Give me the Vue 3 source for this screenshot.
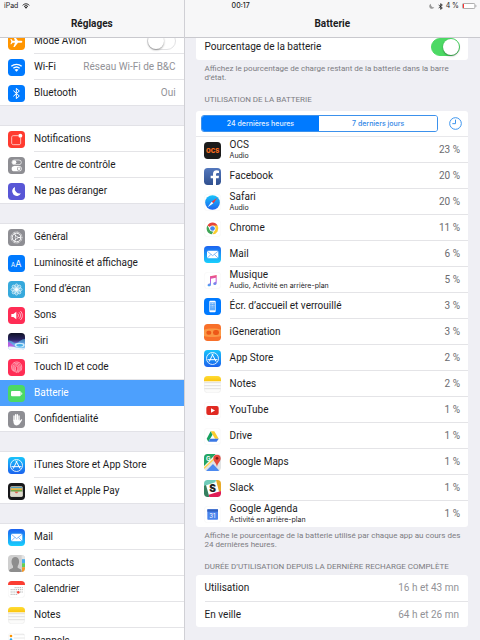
<script setup>
import { h, ref } from 'vue'

const airplane = ref(false)
const showPercent = ref(true)
const period = ref('24h')

// Lettering that sits on top of an icon's artwork, in the icon's 51-unit grid.
const lettering = {
  display: [
    { x: 9, y: 35, size: 18, text: 'A' },
    { x: 22, y: 35, size: 27, text: 'A' }
  ],
  ocs: [{ x: 6, y: 32, size: 18, weight: 900, fill: '#f56a1c', text: 'OCS' }],
  maps: [{ x: 6, y: 20, size: 18, weight: 700, text: 'G' }],
  slack: [{ x: 16, y: 36, size: 30, weight: 900, fill: '#222', text: 'S' }],
  agenda: [{ x: 16, y: 36, size: 18, text: '31' }]
}

const Icon = ({ name }) =>
  h('svg', { viewBox: '0 0 51 51', 'aria-hidden': 'true' }, [
    h('use', { href: `#i-${name}`, width: 51, height: 51 }),
    ...(lettering[name] || []).map((l) =>
      h('text', { x: l.x, y: l.y, 'font-size': l.size, 'font-weight': l.weight || 400, fill: l.fill || '#fff' }, l.text)
    )
  ])
Icon.props = ['name']

const groups = [
  [
    { id: 'airplane', label: 'Mode Avion', toggle: true },
    { id: 'wifi', label: 'Wi-Fi', value: 'Réseau Wi-Fi de B&C' },
    { id: 'bluetooth', label: 'Bluetooth', value: 'Oui' }
  ],
  [
    { id: 'notifications', label: 'Notifications' },
    { id: 'control', label: 'Centre de contrôle' },
    { id: 'dnd', label: 'Ne pas déranger' }
  ],
  [
    { id: 'general', label: 'Général' },
    { id: 'display', label: 'Luminosité et affichage' },
    { id: 'wallpaper', label: 'Fond d’écran' },
    { id: 'sounds', label: 'Sons' },
    { id: 'siri', label: 'Siri' },
    { id: 'touchid', label: 'Touch ID et code' },
    { id: 'battery', label: 'Batterie', active: true },
    { id: 'privacy', label: 'Confidentialité' }
  ],
  [
    { id: 'appstore', label: 'iTunes Store et App Store' },
    { id: 'wallet', label: 'Wallet et Apple Pay' }
  ],
  [
    { id: 'mail', label: 'Mail' },
    { id: 'contacts', label: 'Contacts' },
    { id: 'calendar', label: 'Calendrier' },
    { id: 'notes', label: 'Notes' },
    { id: 'reminders', label: 'Rappels' }
  ]
]

const apps = [
  { id: 'ocs', name: 'OCS', detail: 'Audio', pct: 23 },
  { id: 'facebook', name: 'Facebook', pct: 20 },
  { id: 'safari', name: 'Safari', detail: 'Audio', pct: 20 },
  { id: 'chrome', name: 'Chrome', pct: 11 },
  { id: 'mail', name: 'Mail', pct: 6 },
  { id: 'music', name: 'Musique', detail: 'Audio, Activité en arrière-plan', pct: 5 },
  { id: 'lockscreen', name: 'Écr. d’accueil et verrouillé', pct: 3 },
  { id: 'igen', name: 'iGeneration', pct: 3 },
  { id: 'appstore', name: 'App Store', pct: 2 },
  { id: 'notes', name: 'Notes', pct: 2 },
  { id: 'youtube', name: 'YouTube', pct: 1 },
  { id: 'drive', name: 'Drive', pct: 1 },
  { id: 'maps', name: 'Google Maps', pct: 1 },
  { id: 'slack', name: 'Slack', pct: 1 },
  { id: 'agenda', name: 'Google Agenda', detail: 'Activité en arrière-plan', pct: 1 }
]

const durations = [
  { label: 'Utilisation', value: '16 h et 43 mn' },
  { label: 'En veille', value: '64 h et 26 mn' }
]
</script>

<template>
  <div class="screen">
    <svg class="sprite" aria-hidden="true">
      <defs>
        <linearGradient id="g-blue" x1="0" y1="0" x2="0" y2="1">
          <stop offset="0" stop-color="#1d62f0" /><stop offset="1" stop-color="#19d0fd" />
        </linearGradient>
        <linearGradient id="g-store" x1="0" y1="0" x2="0" y2="1">
          <stop offset="0" stop-color="#18c4fb" /><stop offset="1" stop-color="#1c62ee" />
        </linearGradient>
        <linearGradient id="g-siri" x1="0" y1="0" x2="0" y2="1">
          <stop offset="0" stop-color="#101226" /><stop offset=".4" stop-color="#2b2466" /><stop offset=".65" stop-color="#7d6fe0" /><stop offset="1" stop-color="#d9ecfa" />
        </linearGradient>
        <linearGradient id="g-fb" x1="0" y1="0" x2="0" y2="1">
          <stop offset="0" stop-color="#5478bd" /><stop offset="1" stop-color="#30508f" />
        </linearGradient>
        <linearGradient id="g-music" x1="0" y1="0" x2="0" y2="1">
          <stop offset="0" stop-color="#f5506e" /><stop offset=".5" stop-color="#c55be0" /><stop offset="1" stop-color="#38a8f5" />
        </linearGradient>
        <linearGradient id="g-note" x1="0" y1="0" x2="0" y2="1">
          <stop offset="0" stop-color="#ffdc35" /><stop offset="1" stop-color="#fbc40d" />
        </linearGradient>
        <clipPath id="tile"><rect width="51" height="51" rx="11" /></clipPath>
      </defs>

      <symbol id="i-airplane" viewBox="0 0 51 51">
        <rect width="51" height="51" rx="11" fill="#ff9500" />
        <path d="M43 26c0-2-2-3-4-3h-9L20 10h-4l5 13h-7l-4-5H7l3 8-3 8h3l4-5h7l-5 13h4l10-13h9c2 0 4-1 4-3z" fill="#fff" />
      </symbol>
      <symbol id="i-wifi" viewBox="0 0 51 51">
        <rect width="51" height="51" rx="11" fill="#007aff" />
        <g fill="none" stroke="#fff" stroke-width="4"><path d="M10 22c9-8 22-8 31 0" /><path d="M16 28c6-5 13-5 19 0" /></g>
        <path d="M25.500 38l-6-6c4-3 8-3 12 0z" fill="#fff" />
      </symbol>
      <symbol id="i-bluetooth" viewBox="0 0 51 51">
        <rect width="51" height="51" rx="11" fill="#007aff" />
        <path d="M16 17l18 16-9 8V10l9 8-18 16" fill="none" stroke="#fff" stroke-width="3" />
      </symbol>
      <symbol id="i-notifications" viewBox="0 0 51 51">
        <rect width="51" height="51" rx="11" fill="#ff3b30" />
        <path d="M31 14H16c-3 0-5 2-5 5v17c0 3 2 5 5 5h17c3 0 5-2 5-5V21" fill="none" stroke="#fff" stroke-width="2" />
        <circle cx="37" cy="14" r="6" fill="#fff" />
      </symbol>
      <symbol id="i-control" viewBox="0 0 51 51">
        <rect width="51" height="51" rx="11" fill="#8e8e93" />
        <rect x="12" y="9" width="28" height="14" rx="7" fill="none" stroke="#fff" stroke-width="2" />
        <circle cx="19" cy="16" r="6" fill="#fff" />
        <rect x="11" y="27" width="30" height="16" rx="8" fill="#fff" />
        <circle cx="33" cy="35" r="6" fill="#8e8e93" /><circle cx="33" cy="35" r="4" fill="#fff" />
      </symbol>
      <symbol id="i-dnd" viewBox="0 0 51 51">
        <rect width="51" height="51" rx="11" fill="#5856d6" />
        <path d="M21 12a14 14 0 1 0 18 19A15 15 0 0 1 21 12z" fill="#fff" />
      </symbol>
      <symbol id="i-general" viewBox="0 0 51 51">
        <rect width="51" height="51" rx="11" fill="#8e8e93" />
        <circle cx="25.500" cy="25.500" r="16.500" fill="none" stroke="#fff" stroke-width="3" stroke-dasharray="2.500 1.800" />
        <circle cx="25.500" cy="25.500" r="13" fill="none" stroke="#fff" stroke-width="3" />
        <circle cx="25.500" cy="25.500" r="4" fill="none" stroke="#fff" stroke-width="2" />
        <path d="M29 25.500h9M24 22l-5-8M24 29l-5 8" stroke="#fff" stroke-width="3" />
      </symbol>
      <symbol id="i-display" viewBox="0 0 51 51">
        <rect width="51" height="51" rx="11" fill="#007aff" />
      </symbol>
      <symbol id="i-wallpaper" viewBox="0 0 51 51">
        <rect width="51" height="51" rx="11" fill="#36a9dc" />
        <g fill="#fff" fill-opacity=".25" stroke="#fff" stroke-width="1.500">
          <ellipse v-for="n in 8" :key="n" cx="25.500" cy="16" rx="5" ry="7.500" :transform="`rotate(${n * 45} 25.5 25.5)`" />
        </g>
        <circle cx="25.500" cy="25.500" r="4" fill="#fff" />
      </symbol>
      <symbol id="i-sounds" viewBox="0 0 51 51">
        <rect width="51" height="51" rx="11" fill="#ff2d55" />
        <path d="M10 21h6l9-7v23l-9-7h-6z" fill="#fff" />
        <path d="M29 20c3 3 3 8 0 11M33 16c6 5 6 14 0 19M37 12c8 7 8 20 0 27" fill="none" stroke="#fff" stroke-width="2" />
      </symbol>
      <symbol id="i-siri" viewBox="0 0 51 51">
        <g clip-path="url(#tile)">
          <rect width="51" height="51" fill="url(#g-siri)" />
          <path d="M0 23c10-4 15 8 24 7s15-12 27-12v33H0z" fill="#59c9f2" fill-opacity=".6" />
          <path d="M0 26c8 0 14 13 24 14L0 44z" fill="#c64fe0" fill-opacity=".8" />
          <ellipse cx="35" cy="36" rx="15" ry="7" fill="#e8fbff" fill-opacity=".8" />
          <ellipse cx="35" cy="37" rx="10" ry="4" fill="#45aee8" />
          <path d="M0 42c15-6 30 8 51 3v6H0z" fill="#edf4fc" />
        </g>
      </symbol>
      <symbol id="i-touchid" viewBox="0 0 51 51">
        <rect width="51" height="51" rx="11" fill="#ff2d55" />
        <g fill="none" stroke="#fff" stroke-opacity=".9" stroke-width="1.800">
          <path d="M14 35c-8-14 0-26 12-26s19 12 13 26M18 38c-7-14-2-25 8-25s14 11 9 25M22 40c-7-13-4-23 4-23s9 10 5 24M26 41c-6-12-4-20 0-20s5 9 1 20" />
        </g>
      </symbol>
      <symbol id="i-battery" viewBox="0 0 51 51">
        <rect width="51" height="51" rx="11" fill="#4cd964" />
        <rect x="9" y="18" width="29" height="16" rx="3" fill="#fff" /><path d="M40 22c4 1 4 7 0 8z" fill="#fff" />
      </symbol>
      <symbol id="i-privacy" viewBox="0 0 51 51">
        <rect width="51" height="51" rx="11" fill="#8e8e93" />
        <g stroke="#fff" stroke-width="4" stroke-linecap="round"><path d="M18 28V15M23 26V11M28 26V11M33 28V15" /></g>
        <path d="M16 26h19v4l5-5c2-1 3 1 2 3l-8 12c-5 5-14 4-16-1-1-3-2-6-2-13z" fill="#fff" />
      </symbol>
      <symbol id="i-appstore" viewBox="0 0 51 51">
        <rect width="51" height="51" rx="11" fill="url(#g-store)" />
        <circle cx="25.500" cy="25.500" r="18" fill="none" stroke="#fff" stroke-width="2.500" />
        <path d="M27 12L16 34M24 12l12 22M12 29h27" fill="none" stroke="#fff" stroke-width="3" stroke-linecap="round" />
      </symbol>
      <symbol id="i-wallet" viewBox="0 0 51 51">
        <rect width="51" height="51" rx="11" fill="#171719" />
        <rect x="7" y="10" width="37" height="31" rx="4" fill="#d8d3c5" />
        <path d="M9 12h33v4H9z" fill="#4f9fbd" /><path d="M9 16h33v5H9z" fill="#e3b23e" /><path d="M9 21h33v5H9z" fill="#6fa447" />
        <path d="M7 26h12c2 0 3 5 6.500 5s4.500-5 6.500-5h12v12c0 2-1 3-3 3H10c-2 0-3-1-3-3z" fill="#dedacd" />
        <path d="M19 26h13c-2 0-3 5-6.500 5S21 26 19 26z" fill="#e4604e" />
      </symbol>
      <symbol id="i-mail" viewBox="0 0 51 51">
        <rect width="51" height="51" rx="11" fill="url(#g-blue)" />
        <rect x="9" y="14" width="34" height="23" rx="3" fill="#fff" />
        <path d="M10 16l16 13 16-13M10 36l11-11M42 36L31 25" fill="none" stroke="#4e9cf3" stroke-width="2" />
      </symbol>
      <symbol id="i-contacts" viewBox="0 0 51 51">
        <g clip-path="url(#tile)">
          <rect width="51" height="51" fill="#cfcfcf" />
          <path d="M41 0h10v13H41z" fill="#e4e4e4" /><path d="M42 13h9v12h-9z" fill="#45aef0" /><path d="M42 25h9v12h-9z" fill="#62cf57" /><path d="M42 37h9v14h-9z" fill="#f79a28" />
          <path d="M3 51c0-9 4-9 12-12v-6c-7-9-6-27 7-27s14 18 7 27v6c8 3 12 3 12 12z" fill="#8d8d8d" />
        </g>
      </symbol>
      <symbol id="i-calendar" viewBox="0 0 51 51">
        <rect x=".5" y=".5" width="50" height="50" rx="11" fill="#fff" stroke="#e6e6e6" />
        <path d="M0 11C0 4 4 0 11 0h29c7 0 11 4 11 11v1H0z" fill="#fb3d32" />
        <path d="M20 20h24M8 26h36M8 33h36M8 40h22" stroke="#777" stroke-width="2" stroke-dasharray="3 2.500" />
        <circle cx="31" cy="34" r="4" fill="#fb3d32" />
      </symbol>
      <symbol id="i-notes" viewBox="0 0 51 51">
        <rect x=".5" y=".5" width="50" height="50" rx="11" fill="#fbfbfa" stroke="#dfdfdd" />
        <path d="M0 16v-5C0 4 4 0 11 0h29c7 0 11 4 11 11v5z" fill="url(#g-note)" />
        <path d="M1 20h49M1 29h49M1 38h49" stroke="#d2d2d0" stroke-width="2" />
      </symbol>
      <symbol id="i-reminders" viewBox="0 0 51 51">
        <rect x=".5" y=".5" width="50" height="50" rx="11" fill="#fff" stroke="#e3e3e3" />
        <circle cx="9" cy="9" r="4" fill="#ff9500" /><circle cx="9" cy="20" r="4" fill="#35a7ed" />
        <path d="M17 5h32M17 15h33M17 26h33" stroke="#dcdcdc" stroke-width="2" />
      </symbol>
      <symbol id="i-ocs" viewBox="0 0 51 51">
        <rect width="51" height="51" rx="11" fill="#1b1b1b" />
      </symbol>
      <symbol id="i-facebook" viewBox="0 0 51 51">
        <rect width="51" height="51" rx="11" fill="url(#g-fb)" />
        <path d="M27 51V31h-7v-8h7v-5c0-8 5-11 11-11l7 1v7h-4c-4 0-5 2-5 5v3h9l-1 8h-8v20z" fill="#fff" />
      </symbol>
      <symbol id="i-safari" viewBox="0 0 51 51">
        <rect x=".5" y=".5" width="50" height="50" rx="11" fill="#fff" stroke="#ececec" />
        <circle cx="25.500" cy="25.500" r="22" fill="url(#g-store)" />
        <path d="M40 11L28 28l-5-5z" fill="#f33" /><path d="M11 40l12-17 5 5z" fill="#fff" />
      </symbol>
      <symbol id="i-chrome" viewBox="0 0 51 51">
        <rect x=".5" y=".5" width="50" height="50" rx="11" fill="#fff" stroke="#ececec" />
        <path d="M25.500 25.500L10.300 16.700A17.500 17.500 0 0 1 40.700 16.700z" fill="#e5443a" />
        <path d="M25.500 16.700h15.200A17.500 17.500 0 0 1 25.500 43L33 30z" fill="#fbcd2e" />
        <path d="M10.300 16.700L18 30l7.500 4 3 0-5 9A17.500 17.500 0 0 1 10.300 16.700z" fill="#3fa557" />
        <circle cx="25.500" cy="25.500" r="9" fill="#fff" /><circle cx="25.500" cy="25.500" r="7" fill="#4386ee" />
      </symbol>
      <symbol id="i-music" viewBox="0 0 51 51">
        <rect x=".5" y=".5" width="50" height="50" rx="11" fill="#fff" stroke="#ececec" />
        <path d="M18 13l20-4v24c0 5-3 6-6 6-6 0-5-8 0-8 2 0 3-1 3-3V17l-14 3v17c0 5-3 6-6 6-6 0-5-8 0-8 2 0 3-1 3-3z" fill="url(#g-music)" />
      </symbol>
      <symbol id="i-lockscreen" viewBox="0 0 51 51">
        <rect width="51" height="51" rx="11" fill="#007aff" />
        <rect x="16" y="8" width="19" height="35" rx="3" fill="#fff" />
        <rect x="18" y="13" width="15" height="24" fill="#62adfc" />
        <path d="M20 16h2v2h-2zM25 16h2v2h-2zM29 16h2v2h-2zM20 21h2v2h-2zM25 21h2v2h-2zM29 21h2v2h-2zM20 26h2v2h-2zM25 26h2v2h-2zM29 26h2v2h-2z" fill="#fff" />
      </symbol>
      <symbol id="i-igen" viewBox="0 0 51 51">
        <rect width="51" height="51" rx="11" fill="#f8702a" />
        <path d="M0 17c12-5 39-5 51 0v19c-12 4-39 4-51 0z" fill="#fb9845" />
        <rect x="7" y="20" width="15" height="12" rx="6" fill="#ed5818" /><rect x="27" y="18" width="18" height="15" rx="7" fill="#ed5818" />
      </symbol>
      <symbol id="i-youtube" viewBox="0 0 51 51">
        <rect x=".5" y=".5" width="50" height="50" rx="11" fill="#fff" stroke="#ececec" />
        <rect x="7" y="12" width="37" height="27" rx="6" fill="#e02a22" /><path d="M21 19l12 6.500L21 32z" fill="#fff" />
      </symbol>
      <symbol id="i-drive" viewBox="0 0 51 51">
        <rect x=".5" y=".5" width="50" height="50" rx="11" fill="#fff" stroke="#ececec" />
        <path d="M20 10h11l13 22H33z" fill="#fbcc2f" /><path d="M20 10l5.500 10L13 41 8 32z" fill="#18a260" /><path d="M19 32h25l-6 9H13z" fill="#3b78e5" />
      </symbol>
      <symbol id="i-maps" viewBox="0 0 51 51">
        <g clip-path="url(#tile)">
          <rect width="51" height="51" fill="#e2e4e5" />
          <path d="M0 0h36L0 37z" fill="#23a564" /><path d="M6 51l21-21 20 21z" fill="#4d8af0" />
          <path d="M0 37L36 0h8L0 45z" fill="#f6f6f6" /><path d="M0 40L32 10l3 3L0 46z" fill="#ffd34d" />
          <path d="M39 39C37 27 28 23 28 13a11 11 0 0 1 22 0c0 10-9 14-11 26z" fill="#e5483c" /><circle cx="39" cy="13" r="4" fill="#7b1c17" />
        </g>
      </symbol>
      <symbol id="i-slack" viewBox="0 0 51 51">
        <g clip-path="url(#tile)">
          <rect width="51" height="51" fill="#fff" />
          <path d="M0 0h36l-2 7L0 18z" fill="#6fcbb9" /><path d="M36 0h15v33l-6 2z" fill="#e8ab2a" />
          <path d="M0 17l6-2 10 36H0z" fill="#35805f" /><path d="M14 44l37-11v18H16z" fill="#df1d56" />
        </g>
      </symbol>
      <symbol id="i-agenda" viewBox="0 0 51 51">
        <rect x=".5" y=".5" width="50" height="50" rx="11" fill="#fff" stroke="#ececec" />
        <rect x="10" y="10" width="32" height="31" rx="2" fill="#4a83ec" /><path d="M10 10h32v7H10z" fill="#3160c0" />
      </symbol>
    </svg>

    <aside class="sidebar">
      <header class="bar">
        <div class="status">
          <span>iPad</span>
          <svg class="status-wifi" viewBox="0 0 24 18" aria-hidden="true">
            <path d="M2 7c6-6 14-6 20 0M6 11c4-4 8-4 12 0" fill="none" stroke="#222" stroke-width="3" /><path d="M12 17l-4-4c3-2 5-2 8 0z" fill="#222" />
          </svg>
        </div>
        <h1>Réglages</h1>
      </header>
      <nav class="menu">
        <ul v-for="(group, g) in groups" :key="g" class="group">
          <li v-for="item in group" :key="item.id" :class="{ active: item.active }">
            <label v-if="item.toggle" class="entry">
              <Icon class="icon" :name="item.id" />
              <span class="line"><span>{{ item.label }}</span><input v-model="airplane" class="switch" type="checkbox" role="switch"></span>
            </label>
            <a v-else class="entry" :href="`#${item.id}`">
              <Icon class="icon" :name="item.id" />
              <span class="line"><span>{{ item.label }}</span><span v-if="item.value" class="value">{{ item.value }}</span></span>
            </a>
          </li>
        </ul>
      </nav>
    </aside>

    <main class="detail">
      <header class="bar">
        <div class="status spread">
          <time>00:17</time>
          <div class="indicators">
            <svg class="status-moon" viewBox="0 0 18 18" aria-hidden="true"><path d="M6 2a8 8 0 1 0 10 11A9 9 0 0 1 6 2z" fill="#999" /></svg>
            <svg class="status-bt" viewBox="0 0 15 21" aria-hidden="true"><path d="M2 6l11 9-5 4V2l5 4-11 9" fill="none" stroke="#222" stroke-width="2.500" /></svg>
            <span>4 %</span>
            <svg class="status-batt" viewBox="0 0 45 18" aria-hidden="true"><rect x="1.500" y="1.500" width="37" height="15" rx="3" fill="#fff" stroke="#888" stroke-width="2" /><path d="M3 3h3v12H3z" fill="#f33" /><path d="M41 6c3 1 3 5 0 6z" fill="#777" /></svg>
          </div>
        </div>
        <h1>Batterie</h1>
      </header>
      <div class="content">
        <section class="card">
          <label class="row">
            <span>Pourcentage de la batterie</span>
            <input v-model="showPercent" class="switch" type="checkbox" role="switch">
          </label>
        </section>
        <p class="hint">Affichez le pourcentage de charge restant de la batterie dans la barre d’état.</p>

        <h2>Utilisation de la batterie</h2>
        <section class="card usage">
          <div class="tools">
            <div class="segments">
              <button type="button" :class="{ on: period === '24h' }" @click="period = '24h'">24 dernières heures</button>
              <button type="button" :class="{ on: period === '7d' }" @click="period = '7d'">7 derniers jours</button>
            </div>
            <button type="button" class="clock" aria-label="Durée">
              <svg viewBox="0 0 39 39" aria-hidden="true"><circle cx="19.500" cy="19.500" r="17.500" /><path d="M19.500 8v12H10" /></svg>
            </button>
          </div>
          <ul class="apps">
            <li v-for="app in apps" :key="app.id">
              <Icon class="icon" :name="app.id" />
              <div class="line">
                <div class="names"><span>{{ app.name }}</span><small v-if="app.detail">{{ app.detail }}</small></div>
                <span class="pct">{{ app.pct }} %</span>
              </div>
            </li>
          </ul>
        </section>
        <p class="hint">Affiche le pourcentage de la batterie utilisé par chaque app au cours des 24 dernières heures.</p>

        <h2>Durée d’utilisation depuis la dernière recharge complète</h2>
        <dl class="card durations">
          <div v-for="d in durations" :key="d.label"><dt>{{ d.label }}</dt><dd>{{ d.value }}</dd></div>
        </dl>
      </div>
    </main>
  </div>
</template>

<style>
body {
  margin: 0;
  background: #efeff4;
}
</style>

<style scoped>
.screen {
  display: grid;
  grid-template-columns: 5fr 8fr;
  height: 100vh;
  overflow: hidden;
  background: #efeff4;
  color: #1c1c1e;
  font-family: Roboto, "Liberation Sans", sans-serif;
  font-size: 10px;
  line-height: 12px;
}
.sprite {
  position: absolute;
  width: 0;
  height: 0;
}
ul, dl, dd, h1, h2, p {
  margin: 0;
  padding: 0;
  list-style: none;
}
.sidebar, .detail {
  display: flex;
  flex-direction: column;
  min-width: 0;
  min-height: 0;
  overflow: hidden;
}
.sidebar {
  border-right: 1px solid #d0d0d5;
}
.bar {
  flex: none;
  position: relative;
  z-index: 1;
  box-sizing: border-box;
  height: 38px;
  background: #f7f7f8;
  border-bottom: 1px solid #c9c9ce;
}
.bar h1 {
  margin-top: 6px;
  font-size: 10px;
  line-height: 12px;
  font-weight: 700;
  text-align: center;
}
.status {
  display: flex;
  align-items: center;
  gap: 4px;
  height: 12px;
  padding: 0 3px 0 4px;
  font-family: Inter, "Liberation Sans", sans-serif;
  font-size: 7px;
  line-height: 12px;
}
.spread {
  justify-content: space-between;
  padding-left: 47px;
}
.spread time {
  font-weight: 500;
}
.indicators {
  display: flex;
  align-items: center;
  gap: 3px;
}
.status-wifi { width: 8px; height: 6px; }
.status-moon { width: 6px; height: 6px; }
.status-bt { width: 5px; height: 7px; }
.status-batt { width: 15px; height: 6px; }

.menu {
  display: flex;
  flex-direction: column;
  gap: 20px;
  margin-top: -10px;
}
.group {
  background: #fff;
  box-shadow: 0 -1px #e2e2e7, inset 0 -1px #e2e2e7;
}
.entry {
  display: flex;
  align-items: center;
  gap: 9px;
  height: 26px;
  padding-left: 8px;
  color: inherit;
  text-decoration: none;
}
.icon {
  flex: none;
  width: 17px;
  height: 17px;
  font-family: Inter, "Liberation Sans", sans-serif;
}
.line {
  display: flex;
  flex: 1;
  align-items: center;
  justify-content: space-between;
  align-self: stretch;
  min-width: 0;
  padding-right: 8px;
  white-space: nowrap;
  border-bottom: 1px solid #e4e4e7;
}
li:last-child .line {
  border-bottom-color: transparent;
}
.active {
  background: #4da0fd;
  color: #fff;
}
.active .line {
  border-color: transparent;
}
.value {
  color: #929297;
}
.switch {
  appearance: none;
  flex: none;
  box-sizing: border-box;
  width: 29px;
  height: 18px;
  margin: 0;
  padding: 1px;
  border: 1px solid #e2e2e4;
  border-radius: 9px;
  background: #fff;
}
.switch::before {
  content: "";
  display: block;
  width: 16px;
  height: 16px;
  margin: -1px;
  border-radius: 50%;
  background: #fff;
  box-shadow: 0 1px 2px #0006;
}
.switch:checked {
  border-color: #4cd964;
  background: #4cd964;
}
.switch:checked::before {
  margin-left: 10px;
}

.content {
  margin-top: -4px;
  padding: 0 12px 0 11px;
}
.card {
  background: #fff;
  border-radius: 3px;
}
.row {
  display: flex;
  align-items: center;
  justify-content: space-between;
  height: 26px;
  padding: 0 8px 0 9px;
}
.hint {
  padding: 4px 2px 0 9px;
  color: #7c7c82;
  font-size: 8px;
  line-height: 9px;
}
h2 {
  margin-top: 13px;
  padding: 0 9px;
  color: #7c7c82;
  font-size: 8px;
  line-height: 12px;
  font-weight: 400;
  text-transform: uppercase;
  white-space: nowrap;
}
.usage {
  margin-top: 5px;
}
.tools {
  display: flex;
  align-items: center;
  gap: 11px;
  box-sizing: border-box;
  height: 26px;
  padding: 0 6px 0 5px;
  border-bottom: 1px solid #e8e8eb;
}
.segments {
  display: flex;
  flex: 1;
  box-sizing: border-box;
  height: 17px;
  overflow: hidden;
  border: 1px solid #3c91ec;
  border-radius: 3px;
}
.segments button {
  flex: 1;
  padding: 0;
  border: 0;
  background: #fff;
  color: #3287e6;
  font: 500 7px/15px Inter, "Liberation Sans", sans-serif;
}
.segments .on {
  background: #007aff;
  color: #e4f1ff;
}
.clock {
  width: 13px;
  height: 13px;
  padding: 0;
  border: 0;
  background: none;
}
.clock svg {
  display: block;
  fill: none;
  stroke: #3d95ee;
  stroke-width: 3;
}
.apps li {
  display: flex;
  align-items: center;
  gap: 9px;
  height: 26px;
  padding-left: 8px;
}
.names {
  display: flex;
  flex-direction: column;
}
.names small {
  font-family: Inter, "Liberation Sans", sans-serif;
  font-size: 7px;
  line-height: 9px;
}
.pct {
  color: #6b6b6f;
}
.hint + h2 {
  margin-top: 12px;
}
.durations {
  margin-top: 2px;
  padding-left: 9px;
}
.durations div {
  display: flex;
  align-items: center;
  justify-content: space-between;
  box-sizing: border-box;
  height: 26px;
  padding-right: 9px;
}
.durations div + div {
  border-top: 1px solid #e4e4e7;
}
.durations dd {
  color: #929297;
}
</style>
